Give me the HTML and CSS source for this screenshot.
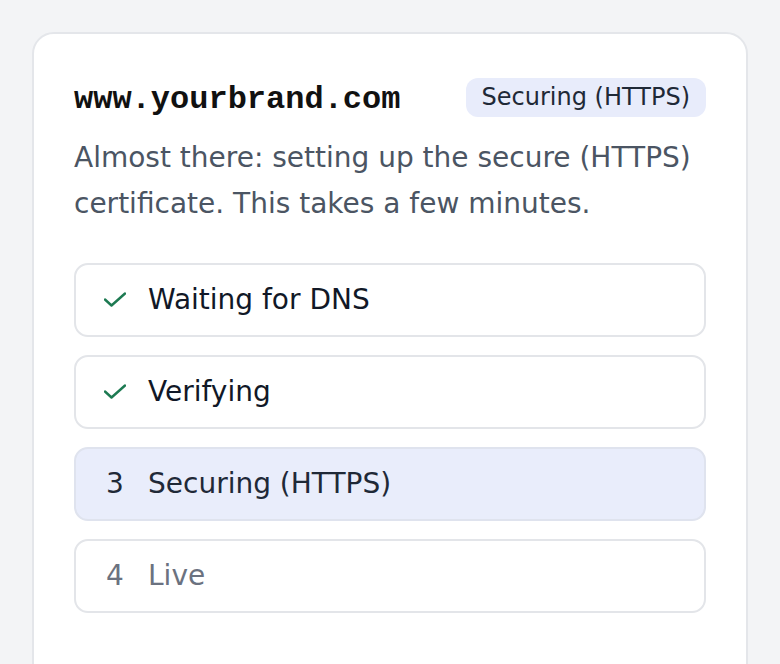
FILE: index.html
```html
<!DOCTYPE html>
<html lang="en">
<head>
<meta charset="utf-8">
<title>Domain status</title>
<link rel="stylesheet" href="styles.css">
</head>
<body>
<div class="card">
  <div class="header">
    <h1 class="domain">www.yourbrand.com</h1>
    <span class="badge">Securing (HTTPS)</span>
  </div>
  <p class="desc">Almost there: setting up the secure (HTTPS) certificate. This takes a few minutes.</p>
  <ol class="steps">
    <li class="step done">
      <span class="marker"><svg width="22" height="16" viewBox="0 0 22 16"><path d="M1 7.5 L7.5 13.5 L21 1.5" fill="none" stroke="#1d7a52" stroke-width="2.4" stroke-linecap="round" stroke-linejoin="round"/></svg></span>
      <span class="label">Waiting for DNS</span>
    </li>
    <li class="step done">
      <span class="marker"><svg width="22" height="16" viewBox="0 0 22 16"><path d="M1 7.5 L7.5 13.5 L21 1.5" fill="none" stroke="#1d7a52" stroke-width="2.4" stroke-linecap="round" stroke-linejoin="round"/></svg></span>
      <span class="label">Verifying</span>
    </li>
    <li class="step current">
      <span class="marker">3</span>
      <span class="label">Securing (HTTPS)</span>
    </li>
    <li class="step pending">
      <span class="marker">4</span>
      <span class="label">Live</span>
    </li>
  </ol>
</div>
</body>
</html>
```
FILE: styles.css
```css
html, body {
  margin: 0;
  height: 100%;
  overflow: hidden;
}
body {
  background: #f3f4f6;
  padding: 32px 32px 0;
  box-sizing: border-box;
  font-family: "DejaVu Sans", sans-serif;
  color: #111827;
}
.card {
  background: #ffffff;
  border: 2px solid #e4e6ea;
  border-radius: 22px;
  padding: 44px 40px 80px;
}
.header {
  display: flex;
  align-items: center;
  justify-content: space-between;
  height: 39px;
}
.domain {
  margin: 0;
  font-family: "Liberation Mono", monospace;
  font-weight: 700;
  font-size: 32px;
  line-height: 39px;
  color: #111111;
  padding-top: 3px;
}
.badge {
  background: #e8ecfb;
  color: #1f2937;
  font-size: 24px;
  line-height: 27px;
  padding: 6px 16px;
  border-radius: 12px;
}
.desc {
  margin: 18px 0 0;
  font-size: 28px;
  line-height: 46px;
  color: #4b5563;
}
.steps {
  list-style: none;
  margin: 36px 0 0;
  padding: 0;
  display: flex;
  flex-direction: column;
  gap: 18px;
}
.step {
  display: flex;
  align-items: center;
  gap: 22px;
  border: 2px solid #e3e5e9;
  border-radius: 14px;
  padding: 14px 28px;
  font-size: 28px;
  line-height: 42px;
  background: #ffffff;
  color: #111827;
}
.marker {
  width: 22px;
  display: flex;
  justify-content: center;
  align-items: center;
}
.current {
  background: #e9edfb;
  border-color: #dfe3ee;
  color: #1f2937;
}
.pending {
  color: #6b7280;
}
```
